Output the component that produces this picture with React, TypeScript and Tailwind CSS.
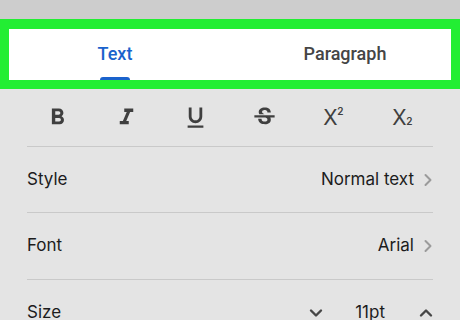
import React from "react";

const Chevron = () => (
  <svg width="10" height="14" viewBox="0 0 10 14" className="ml-[9px]">
    <path d="M2.5 2 L7.5 7 L2.5 12" fill="none" stroke="#9b9b9b" strokeWidth="2" strokeLinecap="round" strokeLinejoin="round" />
  </svg>
);

const Icon = ({ d }: { d: string }) => (
  <svg width="27" height="27" viewBox="0 0 24 24" fill="#3f3f3f">
    <path d={d} />
  </svg>
);

const BOLD =
  "M15.6 10.79c.97-.67 1.65-1.77 1.65-2.79 0-2.26-1.75-4-4-4H7v14h7.04c2.09 0 3.71-1.7 3.71-3.790 0-1.52-.86-2.82-2.150-3.420zM10 6.5h3c.83 0 1.5.67 1.5 1.5s-.67 1.5-1.5 1.5h-3v-3zm3.5 9H10v-3h3.5c.83 0 1.5.67 1.5 1.5s-.67 1.5-1.5 1.5z";
const ITALIC = "M10 4v3h2.21l-3.42 8H6v3h8v-3h-2.21l3.42-8H18V4z";
const UNDER =
  "M12 17c3.31 0 6-2.69 6-6V3h-2.5v8c0 1.93-1.57 3.5-3.5 3.5S8.5 12.93 8.5 11V3H6v8c0 3.31 2.69 6 6 6zm-7 2v2h14v-2H5z";
const STRIKE =
  "M7.24 8.75c-.26-.48-.39-1.03-.39-1.67 0-.61.13-1.16.4-1.67.26-.5.63-.93 1.11-1.29.48-.35 1.05-.63 1.7-.83.66-.19 1.39-.29 2.18-.29.81 0 1.54.11 2.21.34.66.22 1.23.54 1.69.94.47.4.83.88 1.08 1.43.25.55.38 1.15.38 1.81h-3.01c0-.31-.05-.59-.15-.85-.09-.27-.24-.49-.44-.68-.2-.19-.45-.33-.75-.44-.3-.1-.66-.16-1.06-.16-.39 0-.74.04-1.03.13-.29.09-.53.21-.72.36-.19.16-.34.34-.44.55-.1.21-.15.43-.15.66 0 .48.25.88.74 1.21.38.25.77.48 1.41.7H7.39c-.05-.08-.11-.17-.15-.25zM21 12v-2H3v2h9.62c.18.07.4.14.55.2.37.17.66.34.87.51.21.17.35.36.43.57.07.2.11.43.11.69 0 .23-.05.45-.14.66-.09.2-.23.38-.42.53-.19.15-.42.26-.71.35-.29.08-.63.13-1.01.13-.43 0-.83-.04-1.18-.13s-.66-.23-.91-.42c-.25-.19-.45-.44-.59-.75-.14-.31-.25-.76-.25-1.21H6.4c0 .55.08 1.13.24 1.58.16.45.37.85.65 1.21.28.35.6.66.98.92.37.26.78.48 1.22.65.44.17.9.3 1.38.39.48.08.96.13 1.44.13.8 0 1.53-.09 2.18-.28s1.21-.45 1.67-.79c.46-.34.82-.77 1.07-1.27s.38-1.07.38-1.71c0-.6-.1-1.14-.31-1.61-.05-.11-.11-.23-.17-.33H21z";

export default function App() {
  return (
    <div className="w-[460px] h-[320px] overflow-hidden bg-[#e4e4e4] flex flex-col" style={{ fontFamily: "Inter, 'Noto Sans', sans-serif" }}>
      <div className="h-[19px] bg-[#cdcdcd] shrink-0" />
      {/* tab bar */}
      <div className="relative h-[70px] bg-white shrink-0 flex" style={{ fontFamily: "Roboto, sans-serif" }}>
        <div className="flex-1 flex flex-col items-center">
          <div className="h-[58px] pt-[10px] flex items-center text-[18px] font-medium text-[#1a62cc]">Text</div>
          <div className="w-[30px] h-[3px] rounded-t-[3px] bg-[#1a62cc]" />
        </div>
        <div className="flex-1 flex flex-col items-center">
          <div className="h-[58px] pt-[10px] flex items-center text-[18px] font-medium text-[#454545]">Paragraph</div>
        </div>
        <div className="absolute inset-0 border-t-[10px] border-b-[9px] border-x-[9px] border-[#22ee33]" />
      </div>
      {/* format row */}
      <div className="h-[57px] shrink-0 grid grid-cols-6 mx-[23px] items-center">
        <div className="flex justify-center"><Icon d={BOLD} /></div>
        <div className="flex justify-center"><Icon d={ITALIC} /></div>
        <div className="flex justify-center"><Icon d={UNDER} /></div>
        <div className="flex justify-center"><Icon d={STRIKE} /></div>
        <div className="flex justify-center text-[#3f3f3f] text-[21px] leading-none">
          <span className="relative pr-[6px]">X<span className="absolute left-[14px] top-[-1px] text-[10px] font-semibold">2</span></span>
        </div>
        <div className="flex justify-center text-[#3f3f3f] text-[21px] leading-none">
          <span className="relative pr-[6px]">X<span className="absolute left-[14px] top-[9px] text-[10px] font-semibold">2</span></span>
        </div>
      </div>
      <div className="mx-[27px] h-px bg-[#c9c9c9] shrink-0" />
      <div className="mx-[27px] h-[65px] shrink-0 flex items-center justify-between text-[17px] text-[#1c1c1c]">
        <span>Style</span>
        <span className="flex items-center">Normal text<Chevron /></span>
      </div>
      <div className="mx-[27px] h-px bg-[#c9c9c9] shrink-0" />
      <div className="mx-[27px] h-[66px] shrink-0 flex items-center justify-between text-[17px] text-[#1c1c1c]">
        <span>Font</span>
        <span className="flex items-center">Arial<Chevron /></span>
      </div>
      <div className="mx-[27px] h-px bg-[#c9c9c9] shrink-0" />
      <div className="mx-[27px] h-[66px] shrink-0 flex items-center justify-between text-[17px] text-[#1c1c1c]">
        <span>Size</span>
        <span className="flex items-center">
          <svg width="14" height="10" viewBox="0 0 14 10">
            <path d="M2 2.5 L7 7.5 L12 2.5" fill="none" stroke="#474747" strokeWidth="2.4" strokeLinecap="round" strokeLinejoin="round" />
          </svg>
          <span className="ml-[32px] mr-[34px]">11pt</span>
          <svg width="14" height="10" viewBox="0 0 14 10">
            <path d="M2 7.5 L7 2.5 L12 7.5" fill="none" stroke="#474747" strokeWidth="2.4" strokeLinecap="round" strokeLinejoin="round" />
          </svg>
        </span>
      </div>
    </div>
  );
}
